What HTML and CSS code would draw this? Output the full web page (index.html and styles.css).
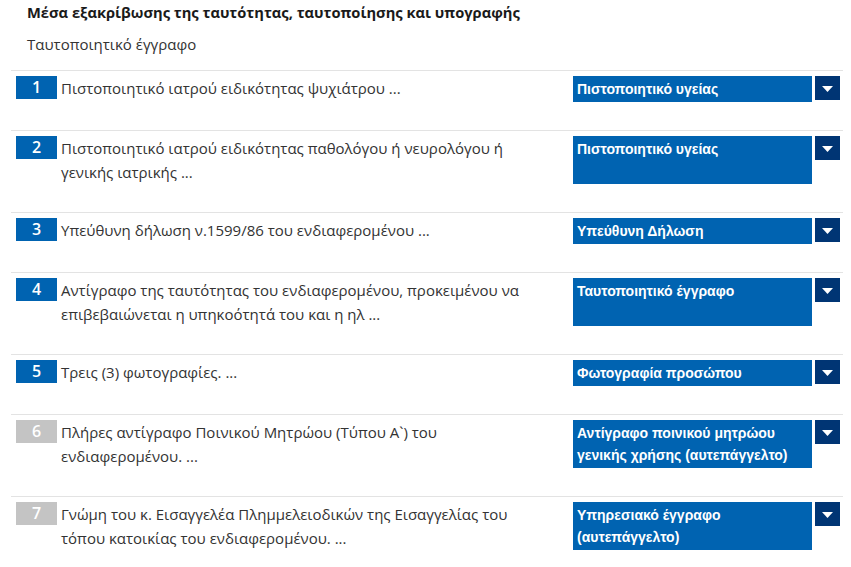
FILE: index.html
```html
<!DOCTYPE html>
<html lang="el">
<head>
<meta charset="utf-8">
<title>Μέσα εξακρίβωσης</title>
<link rel="stylesheet" href="styles.css">
</head>
<body>
<div class="page">
  <div class="head">
    <div class="title">Μέσα εξακρίβωσης της ταυτότητας, ταυτοποίησης και υπογραφής</div>
    <div class="subtitle">Ταυτοποιητικό έγγραφο</div>
  </div>
  <ul class="list">
    <li class="row">
      <span class="num">1</span>
      <span class="desc">Πιστοποιητικό ιατρού ειδικότητας ψυχιάτρου ...</span>
      <div class="select"><span class="select-label">Πιστοποιητικό υγείας</span></div>
      <span class="arrow"><svg width="11" height="6" viewBox="0 0 11 6"><path d="M0 0H11L5.5 6Z" fill="#fff"/></svg></span>
    </li>
    <li class="row">
      <span class="num">2</span>
      <span class="desc">Πιστοποιητικό ιατρού ειδικότητας παθολόγου ή νευρολόγου ή γενικής ιατρικής ...</span>
      <div class="select select-tall"><span class="select-label">Πιστοποιητικό υγείας</span></div>
      <span class="arrow"><svg width="11" height="6" viewBox="0 0 11 6"><path d="M0 0H11L5.5 6Z" fill="#fff"/></svg></span>
    </li>
    <li class="row">
      <span class="num">3</span>
      <span class="desc">Υπεύθυνη δήλωση ν.1599/86 του ενδιαφερομένου ...</span>
      <div class="select"><span class="select-label">Υπεύθυνη Δήλωση</span></div>
      <span class="arrow"><svg width="11" height="6" viewBox="0 0 11 6"><path d="M0 0H11L5.5 6Z" fill="#fff"/></svg></span>
    </li>
    <li class="row">
      <span class="num">4</span>
      <span class="desc">Αντίγραφο της ταυτότητας του ενδιαφερομένου, προκειμένου να επιβεβαιώνεται η υπηκοότητά του και η ηλ ...</span>
      <div class="select select-tall"><span class="select-label">Ταυτοποιητικό έγγραφο</span></div>
      <span class="arrow"><svg width="11" height="6" viewBox="0 0 11 6"><path d="M0 0H11L5.5 6Z" fill="#fff"/></svg></span>
    </li>
    <li class="row">
      <span class="num">5</span>
      <span class="desc">Τρεις (3) φωτογραφίες. ...</span>
      <div class="select"><span class="select-label">Φωτογραφία προσώπου</span></div>
      <span class="arrow"><svg width="11" height="6" viewBox="0 0 11 6"><path d="M0 0H11L5.5 6Z" fill="#fff"/></svg></span>
    </li>
    <li class="row">
      <span class="num num-off">6</span>
      <span class="desc">Πλήρες αντίγραφο Ποινικού Μητρώου (Τύπου Α`) του ενδιαφερομένου. ...</span>
      <div class="select select-tall"><span class="select-label">Αντίγραφο ποινικού μητρώου γενικής χρήσης (αυτεπάγγελτο)</span></div>
      <span class="arrow"><svg width="11" height="6" viewBox="0 0 11 6"><path d="M0 0H11L5.5 6Z" fill="#fff"/></svg></span>
    </li>
    <li class="row">
      <span class="num num-off">7</span>
      <span class="desc">Γνώμη του κ. Εισαγγελέα Πλημμελειοδικών της Εισαγγελίας του τόπου κατοικίας του ενδιαφερομένου. ...</span>
      <div class="select select-tall"><span class="select-label">Υπηρεσιακό έγγραφο (αυτεπάγγελτο)</span></div>
      <span class="arrow"><svg width="11" height="6" viewBox="0 0 11 6"><path d="M0 0H11L5.5 6Z" fill="#fff"/></svg></span>
    </li>
  </ul>
</div>
</body>
</html>
```

FILE: styles.css
```css
html, body {
  margin: 0;
  padding: 0;
  background: #fff;
}

body {
  font-family: "Open Sans", "Noto Sans", sans-serif;
  color: #333;
}

.page {
  padding: 2px 8px 0 11px;
}

.head {
  padding-left: 16px;
}

.title {
  font-size: 14.7px;
  line-height: 20px;
  font-weight: 700;
  color: #1a1a1a;
}

.subtitle {
  margin-top: 12px;
  font-size: 15px;
  line-height: 20px;
  color: #333;
}

.list {
  list-style: none;
  margin: 16px 0 0;
  padding: 0;
}

.row {
  display: grid;
  grid-template-columns: 41px 1fr 239px 28px;
  align-items: start;
  border-top: 1px solid #e3e3e3;
  padding: 5px 3px 28px 5px;
}

.num {
  height: 23px;
  line-height: 23px;
  background: #0063b1;
  color: #fff;
  font-size: 16px;
  font-weight: 600;
  text-align: center;
}

.num-off {
  background: #c4c4c4;
}

.desc {
  margin-left: 4px;
  padding-right: 30px;
  font-size: 15px;
  line-height: 24px;
  color: #333;
}

.select {
  box-sizing: border-box;
  min-height: 26px;
  padding: 2px 4px;
  background: #0063b1;
  color: #fff;
  font-family: "Liberation Sans", Arial, sans-serif;
  font-weight: 700;
  font-size: 14px;
  line-height: 22px;
}

.select-tall {
  height: 48px;
}

.arrow {
  margin-left: 3px;
  height: 24px;
  background: #003574;
  display: flex;
  align-items: center;
  justify-content: center;
  padding-top: 1px;
  box-sizing: border-box;
}

.arrow svg {
  display: block;
}
```
